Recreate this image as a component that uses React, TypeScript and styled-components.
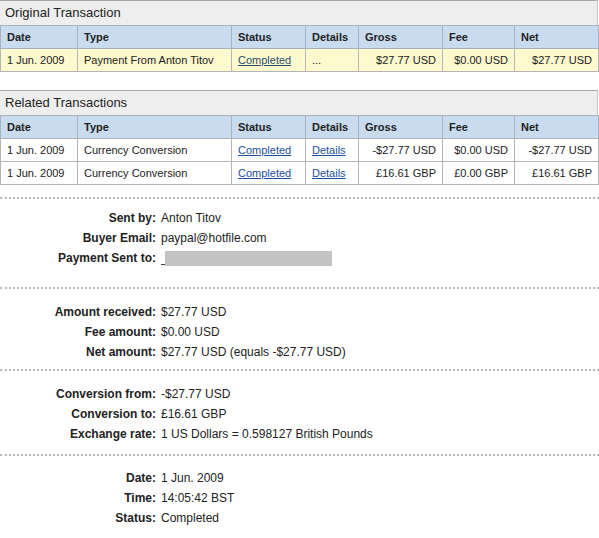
import React from "react";
import styled, { createGlobalStyle } from "styled-components";

const Global = createGlobalStyle`
  html, body { margin: 0; padding: 0; background: #ffffff; }
  body { font-family: "Liberation Sans", Arial, sans-serif; color: #222; }
`;

const Page = styled.div`
  width: 599px;
  display: flex;
  flex-direction: column;
`;

const Block = styled.section<{ $gap?: number }>`
  width: 598px;
  margin-top: ${(p) => p.$gap ?? 0}px;
`;

const TitleBar = styled.div`
  height: 25px;
  box-sizing: border-box;
  border-top: 1px solid #a9a9a9;
  border-right: 1px solid #c8c8c8;
  background: #eeeeee;
  font-size: 13px;
  line-height: 24px;
  padding-left: 5px;
  color: #222;
`;

const Table = styled.table`
  width: 598px;
  border-collapse: collapse;
  table-layout: fixed;
  font-size: 11px;
`;

const Th = styled.th`
  background: #c9dbee;
  border: 1px solid #a9b3bd;
  height: 22px;
  padding: 0 6px;
  text-align: left;
  font-weight: bold;
  color: #222;
`;

const Td = styled.td<{ $num?: boolean; $hl?: boolean }>`
  background: ${(p) => (p.$hl ? "#fff9cf" : "#ffffff")};
  border: 1px solid #b5b5b5;
  height: 22px;
  padding: 0 6px;
  text-align: ${(p) => (p.$num ? "right" : "left")};
  color: #222;
  white-space: nowrap;
`;

const Link = styled.a<{ $dark?: boolean }>`
  color: ${(p) => (p.$dark ? "#2a4f6e" : "#1d4f9a")};
  text-decoration: underline;
  cursor: pointer;
`;

const Dotted = styled.div<{ $mt: number }>`
  margin-top: ${(p) => p.$mt}px;
  width: 599px;
  border-top: 2px dotted #b8b8b8;
  height: 0;
`;

const Info = styled.div<{ $mt: number }>`
  margin-top: ${(p) => p.$mt}px;
  display: grid;
  grid-template-columns: 156px 1fr;
  column-gap: 5px;
  row-gap: 6px;
  font-size: 12px;
  line-height: 14px;
`;

const Label = styled.div`
  text-align: right;
  font-weight: bold;
  color: #222;
`;

const Value = styled.div`
  color: #222;
  display: flex;
  align-items: center;
`;

const RedactedRow = styled.span`
  display: inline-flex;
  align-items: flex-end;
  height: 15px;
`;

const Stub = styled.span`
  display: inline-block;
  width: 4px;
  height: 1px;
  margin-bottom: 1px;
  background: #444;
`;

const Redacted = styled.span`
  display: inline-block;
  width: 167px;
  height: 15px;
  background: #c3c3c3;
`;

const cols = [77, 154, 74, 53, 84, 72, 84];
const heads = ["Date", "Type", "Status", "Details", "Gross", "Fee", "Net"];

type Row = {
  date: string;
  type: string;
  details: string | null;
  gross: string;
  fee: string;
  net: string;
};

const TxTable = ({ rows, hl }: { rows: Row[]; hl?: boolean }) => (
  <Table>
    <colgroup>
      {cols.map((w, i) => (
        <col key={i} style={{ width: w }} />
      ))}
    </colgroup>
    <thead>
      <tr>
        {heads.map((h) => (
          <Th key={h}>{h}</Th>
        ))}
      </tr>
    </thead>
    <tbody>
      {rows.map((r, i) => (
        <tr key={i}>
          <Td $hl={hl}>{r.date}</Td>
          <Td $hl={hl}>{r.type}</Td>
          <Td $hl={hl}>
            <Link $dark={hl}>Completed</Link>
          </Td>
          <Td $hl={hl}>{r.details ? <Link>{r.details}</Link> : "..."}</Td>
          <Td $hl={hl} $num>{r.gross}</Td>
          <Td $hl={hl} $num>{r.fee}</Td>
          <Td $hl={hl} $num>{r.net}</Td>
        </tr>
      ))}
    </tbody>
  </Table>
);

const InfoBlock = ({ mt, items }: { mt: number; items: [string, React.ReactNode][] }) => (
  <Info $mt={mt}>
    {items.map(([l, v]) => (
      <React.Fragment key={l}>
        <Label>{l}</Label>
        <Value>{v}</Value>
      </React.Fragment>
    ))}
  </Info>
);

export default function App() {
  return (
    <Page>
      <Global />
      <Block>
        <TitleBar>Original Transaction</TitleBar>
        <TxTable
          hl
          rows={[
            {
              date: "1 Jun. 2009",
              type: "Payment From Anton Titov",
              details: null,
              gross: "$27.77 USD",
              fee: "$0.00 USD",
              net: "$27.77 USD",
            },
          ]}
        />
      </Block>
      <Block $gap={18}>
        <TitleBar>Related Transactions</TitleBar>
        <TxTable
          rows={[
            {
              date: "1 Jun. 2009",
              type: "Currency Conversion",
              details: "Details",
              gross: "-$27.77 USD",
              fee: "$0.00 USD",
              net: "-$27.77 USD",
            },
            {
              date: "1 Jun. 2009",
              type: "Currency Conversion",
              details: "Details",
              gross: "£16.61 GBP",
              fee: "£0.00 GBP",
              net: "£16.61 GBP",
            },
          ]}
        />
      </Block>
      <Dotted $mt={12} />
      <InfoBlock
        mt={12}
        items={[
          ["Sent by:", "Anton Titov"],
          ["Buyer Email:", "paypal@hotfile.com"],
          [
            "Payment Sent to:",
            <RedactedRow>
              <Stub />
              <Redacted />
            </RedactedRow>,
          ],
        ]}
      />
      <Dotted $mt={21} />
      <InfoBlock
        mt={16}
        items={[
          ["Amount received:", "$27.77 USD"],
          ["Fee amount:", "$0.00 USD"],
          ["Net amount:", "$27.77 USD (equals -$27.77 USD)"],
        ]}
      />
      <Dotted $mt={10} />
      <InfoBlock
        mt={16}
        items={[
          ["Conversion from:", "-$27.77 USD"],
          ["Conversion to:", "£16.61 GBP"],
          ["Exchange rate:", "1 US Dollars = 0.598127 British Pounds"],
        ]}
      />
      <Dotted $mt={13} />
      <InfoBlock
        mt={15}
        items={[
          ["Date:", "1 Jun. 2009"],
          ["Time:", "14:05:42 BST"],
          ["Status:", "Completed"],
        ]}
      />
    </Page>
  );
}
